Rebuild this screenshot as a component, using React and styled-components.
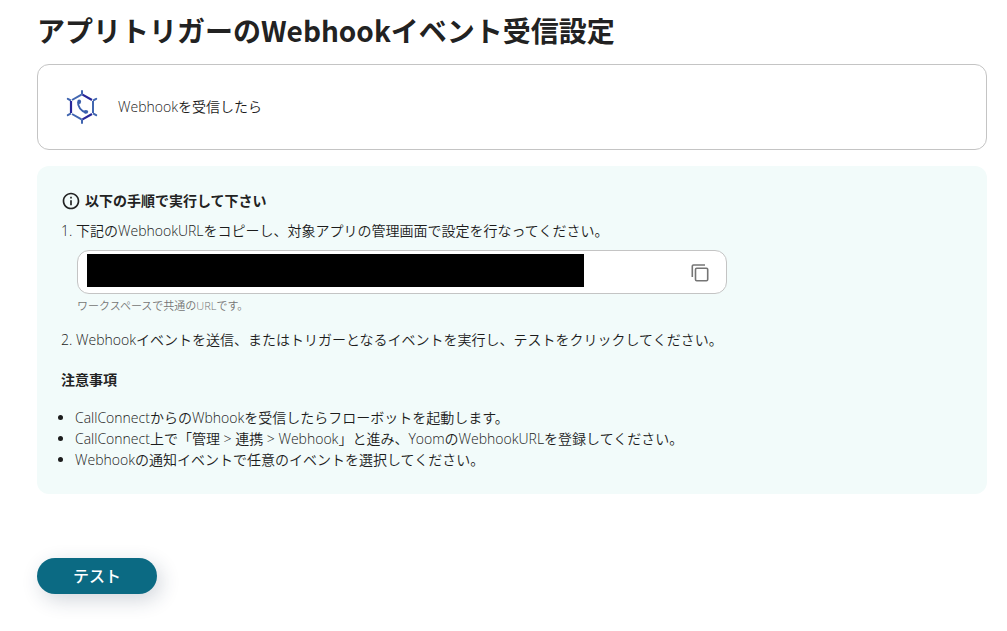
import React from "react";
import styled, { createGlobalStyle } from "styled-components";

const GlobalStyle = createGlobalStyle`
  * {
    box-sizing: border-box;
  }
  body {
    margin: 0;
    background-color: #ffffff;
    color: #1c1c1c;
    font-family: "Open Sans", "Noto Sans CJK JP", sans-serif;
    font-size: 14px;
    font-weight: 350;
    line-height: 20px;
  }
`;

const Page = styled.main`
  padding: 10px 20px 36px 37px;
`;

const Title = styled.h1`
  margin: 0 0 14px;
  color: #222222;
  font-family: "Noto Sans CJK JP", sans-serif;
  font-size: 28px;
  font-weight: 700;
  line-height: 40px;
`;

const TriggerCard = styled.section`
  display: flex;
  align-items: center;
  gap: 19px;
  padding: 24px 27px;
  border: 1px solid #c4c4c4;
  border-radius: 12px;
  background-color: #ffffff;

  svg {
    width: 34px;
    height: 36px;
  }
  p {
    margin: 0;
  }
`;

const Guide = styled.section`
  margin-top: 16px;
  padding: 25px 24px 24px;
  border-radius: 12px;
  background-color: #f2fbfa;
`;

const GuideTitle = styled.h2`
  display: flex;
  align-items: center;
  gap: 4px;
  margin: 0;
  color: #222222;
  font-size: 14px;
  font-weight: 700;
  line-height: 20px;

  svg {
    width: 20px;
    height: 20px;
  }
`;

const Step = styled.p`
  margin: 0;
  padding-top: ${(props) => props.$space}px;
`;

const UrlBlock = styled.div`
  max-width: 666px;
  padding: 9px 0 0 16px;
`;

const UrlField = styled.div`
  display: flex;
  align-items: center;
  justify-content: space-between;
  height: 44px;
  padding: 0 14px 3px 9px;
  border: 1px solid #c4c4c4;
  border-radius: 12px;
  background-color: #ffffff;
`;

const UrlInput = styled.input`
  flex: 0 1 497px;
  min-width: 0;
  height: 33px;
  padding: 0;
  border: none;
  border-radius: 0;
  background-color: #000000;
  color: #000000;
`;

const CopyButton = styled.button`
  display: flex;
  margin-top: 5px;
  padding: 0;
  border: none;
  background: none;
  color: #757575;
  cursor: pointer;

  svg {
    width: 24px;
    height: 20px;
  }
`;

const Hint = styled.p`
  margin: 2px 0 0;
  color: #757575;
  font-size: 11px;
  line-height: 20px;
`;

const NotesTitle = styled.h3`
  margin: 20px 0 17px;
  color: #222222;
  font-size: 14px;
  font-weight: 700;
  line-height: 20px;
`;

const Notes = styled.ul`
  margin: 0;
  padding-left: 14px;
  line-height: 21px;
`;

const TestButton = styled.button`
  display: block;
  width: 120px;
  height: 36px;
  margin-top: 64px;
  padding: 0;
  border: none;
  border-radius: 18px;
  background-color: #0b6a83;
  color: #ffffff;
  font-family: inherit;
  font-size: 16px;
  font-weight: 500;
  line-height: 36px;
  box-shadow: 4px 6px 20px rgba(30, 50, 80, 0.2);
  cursor: pointer;
`;

const CallConnectLogo = () => (
  <svg viewBox="0 0 34 36" fill="none" strokeWidth="2" aria-hidden="true">
    <g stroke="#4166b0">
      <path d="M16.5 5.6L7 11M28 12v12M16.5 30.4L7 25" />
      <path
        strokeLinecap="round"
        strokeWidth="2"
        d="M17 2v3M17 31v3M2.8 9.8l2.4 1.4M31.2 9.8l-2.4 1.4M2.8 26.2l2.4-1.4M31.2 26.2l-2.4-1.4"
      />
    </g>
    <path stroke="#29289a" strokeWidth="2.2" d="M17.5 5.6L27 11M6 12v12M17.5 30.4L27 25" />
    <path stroke="#3b60ad" d="M13.2 13c-.8 4.6 3 9.2 7.8 10.6" />
    <g fill="#3b60ad">
      <ellipse cx="14.2" cy="12.8" rx="1.9" ry="2.2" />
      <ellipse cx="20.9" cy="22.8" rx="2.3" ry="1.9" />
    </g>
  </svg>
);

const InfoIcon = () => (
  <svg viewBox="0 0 24 24" fill="currentColor" aria-hidden="true">
    <path d="M11 7h2v2h-2zm0 4h2v6h-2zm1-9C6.48 2 2 6.48 2 12s4.48 10 10 10 10-4.48 10-10S17.52 2 12 2zm0 18c-4.41 0-8-3.59-8-8s3.59-8 8-8 8 3.59 8 8-3.59 8-8 8z" />
  </svg>
);

const CopyIcon = () => (
  <svg viewBox="0 0 24 20" fill="none" stroke="currentColor" strokeWidth="1.6" aria-hidden="true">
    <path d="M4.3 14V3.2a1.2 1.2 0 0 1 1.2-1.2H17" />
    <rect x="7.5" y="5.3" width="12.2" height="12.4" rx="1.2" />
  </svg>
);

const notes = [
  "CallConnectからのWbhookを受信したらフローボットを起動します。",
  "CallConnect上で「管理 > 連携 > Webhook」と進み、YoomのWebhookURLを登録してください。",
  "Webhookの通知イベントで任意のイベントを選択してください。",
];

const App = () => {
  return (
    <>
      <GlobalStyle />
      <Page lang="ja">
        <Title>アプリトリガーのWebhookイベント受信設定</Title>
        <TriggerCard>
          <CallConnectLogo />
          <p>Webhookを受信したら</p>
        </TriggerCard>
        <Guide>
          <GuideTitle>
            <InfoIcon />
            以下の手順で実行して下さい
          </GuideTitle>
          <Step $space={10}>
            <label htmlFor="webhook-url">
              1. 下記のWebhookURLをコピーし、対象アプリの管理画面で設定を行なってください。
            </label>
          </Step>
          <UrlBlock>
            <UrlField>
              <UrlInput id="webhook-url" type="text" readOnly />
              <CopyButton type="button" aria-label="コピー">
                <CopyIcon />
              </CopyButton>
            </UrlField>
            <Hint>ワークスペースで共通のURLです。</Hint>
          </UrlBlock>
          <Step $space={14}>
            2. Webhookイベントを送信、またはトリガーとなるイベントを実行し、テストをクリックしてください。
          </Step>
          <NotesTitle>注意事項</NotesTitle>
          <Notes>
            {notes.map((note) => (
              <li key={note}>{note}</li>
            ))}
          </Notes>
        </Guide>
        <TestButton type="button">テスト</TestButton>
      </Page>
    </>
  );
};

export default App;
